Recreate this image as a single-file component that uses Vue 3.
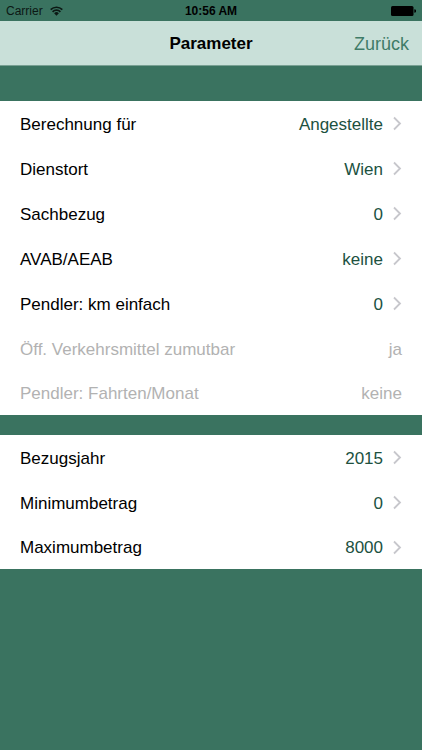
<script setup>
const groups = [
  [
    { label: 'Berechnung für', value: 'Angestellte' },
    { label: 'Dienstort', value: 'Wien' },
    { label: 'Sachbezug', value: '0' },
    { label: 'AVAB/AEAB', value: 'keine' },
    { label: 'Pendler: km einfach', value: '0' },
    { label: 'Öff. Verkehrsmittel zumutbar', value: 'ja', disabled: true },
    { label: 'Pendler: Fahrten/Monat', value: 'keine', disabled: true },
  ],
  [
    { label: 'Bezugsjahr', value: '2015' },
    { label: 'Minimumbetrag', value: '0' },
    { label: 'Maximumbetrag', value: '8000' },
  ],
]
</script>

<template>
  <div class="screen">
    <header class="top">
      <div class="status">
        <span class="carrier">
          Carrier
          <svg class="wifi" viewBox="0 0 13 10" aria-hidden="true">
            <path d="M0.7 3.6a8.3 8.3 0 0 1 11.6 0M2.6 5.8a5.5 5.5 0 0 1 7.8 0" fill="none" stroke="currentColor" stroke-width="1.7" />
            <path d="M4.1 7.3a3.3 3.3 0 0 1 4.8 0L6.5 9.8z" fill="currentColor" />
          </svg>
        </span>
        <span class="time">10:56 AM</span>
        <svg class="battery" viewBox="0 0 25 10" aria-hidden="true">
          <rect width="22.5" height="10" rx="1.5" fill="currentColor" />
          <path d="M23.3 3.2a1.8 1.8 0 0 1 0 3.6z" fill="currentColor" />
        </svg>
      </div>
      <nav class="bar">
        <h1>Parameter</h1>
        <button class="back" type="button">Zurück</button>
      </nav>
    </header>
    <main>
      <section v-for="(rows, g) in groups" :key="g" class="group">
        <button v-for="row in rows" :key="row.label" type="button" class="row" :disabled="row.disabled">
          <span>{{ row.label }}</span>
          <span class="value">{{ row.value }}</span>
          <svg v-if="!row.disabled" class="chevron" viewBox="0 0 9 15" aria-hidden="true">
            <path d="M1 1.5l6 6-6 6" fill="none" stroke="currentColor" stroke-width="1.8" />
          </svg>
        </button>
      </section>
    </main>
  </div>
</template>

<style>
body {
  margin: 0;
  background: #3a7360;
}
</style>

<style scoped>
.screen {
  min-height: 100vh;
  background: #3a7360;
  color: #000;
  font-family: "Liberation Sans", Arial, sans-serif;
}
.top {
  background: #c9e0d9;
}
.status {
  display: grid;
  grid-template-columns: 1fr auto 1fr;
  align-items: center;
  height: 21px;
  padding: 0 6px;
  background: #3a7360;
  font-size: 12px;
}
.carrier {
  display: flex;
  align-items: center;
  gap: 7px;
  color: #0c1814;
}
.wifi {
  width: 13px;
  height: 10px;
}
.time {
  font-weight: bold;
}
.battery {
  justify-self: end;
  width: 25px;
  height: 10px;
}
.bar {
  display: grid;
  grid-template-columns: 1fr auto 1fr;
  align-items: center;
  height: 42px;
  padding: 2px 13px 0;
  border-bottom: 1px solid #78a093;
}
h1 {
  grid-column: 2;
  margin: 0;
  font-size: 17px;
}
button {
  border: 0;
  background: none;
  font: inherit;
}
.back {
  justify-self: end;
  padding: 0;
  color: #3f7c68;
  font-size: 18px;
}
main {
  display: flex;
  flex-direction: column;
  gap: 20px;
  padding-top: 35px;
}
.group {
  background: #fff;
}
.row {
  display: flex;
  align-items: center;
  width: 100%;
  height: 45px;
  padding: 2px 20px 0;
  color: #000;
  font-size: 17px;
  text-align: left;
}
.row:last-child {
  height: 44px;
}
.value {
  margin-left: auto;
  color: #20513f;
}
.chevron {
  width: 9px;
  height: 15px;
  margin: 0 0 2px 10px;
  color: #c7c7cc;
}
.row:disabled,
.row:disabled .value {
  color: #b2b2b2;
}
</style>
